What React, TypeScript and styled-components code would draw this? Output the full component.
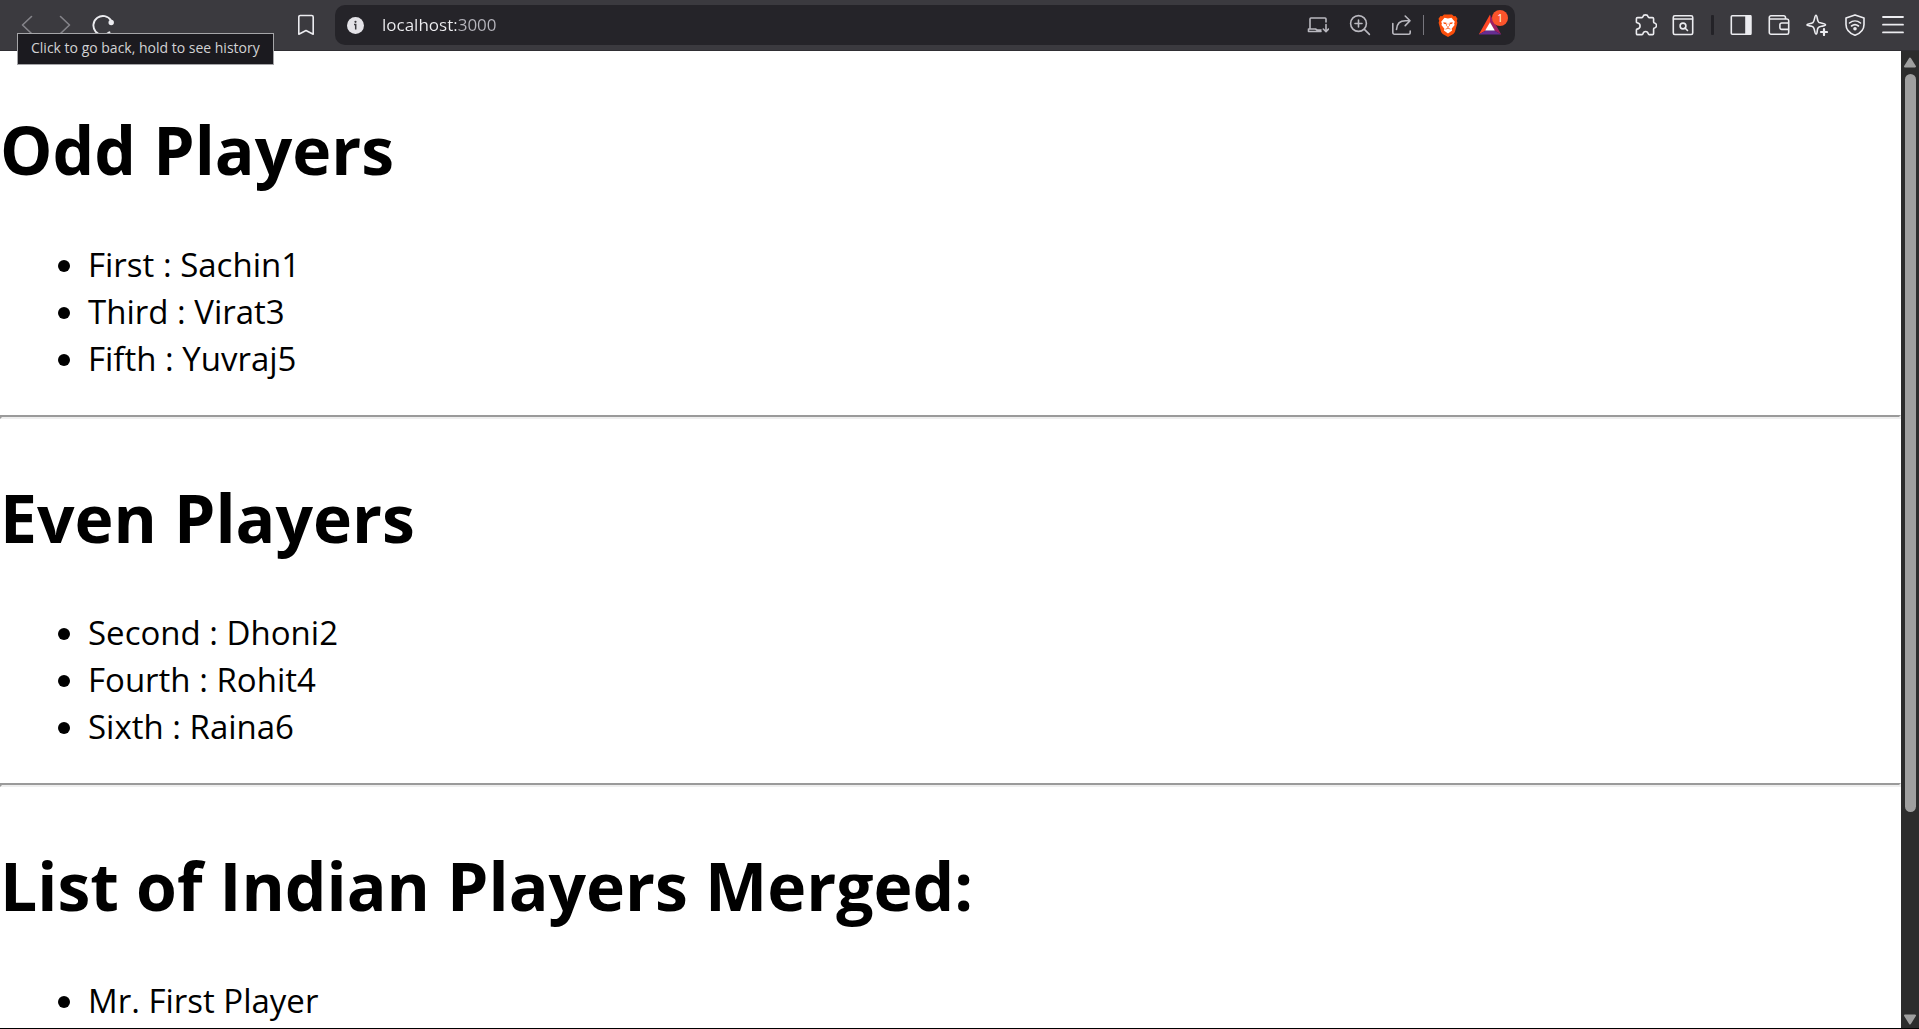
import React from "react";
import styled, { createGlobalStyle } from "styled-components";

const GlobalStyle = createGlobalStyle`
  * { box-sizing: border-box; }
  body {
    margin: 0;
    background: #fff;
    font-family: "Segoe UI", "Open Sans", "Noto Sans", sans-serif;
  }
`;

const Browser = styled.div`
  display: flex;
  flex-direction: column;
  height: 100vh;
  overflow: hidden;
  border-bottom: 1px solid #000;
`;

const Toolbar = styled.header`
  position: relative;
  display: flex;
  flex: none;
  align-items: center;
  padding: 5px 7px 5px 8px;
  background: #3b3a3f;
  border-bottom: 1px solid #2f2e33;
`;

const NavGroup = styled.nav`
  display: flex;
  margin-right: 165px;
`;

const IconButton = styled.button<{ $width?: number; $color?: string }>`
  position: relative;
  display: flex;
  flex: none;
  align-items: center;
  justify-content: center;
  width: ${(p) => p.$width ?? 38}px;
  height: 40px;
  padding: 0;
  border: 0;
  background: none;
  color: ${(p) => p.$color ?? "#ececf0"};
`;

const AddressBar = styled.div`
  display: flex;
  flex: 1;
  align-items: center;
  min-width: 0;
  height: 40px;
  margin: 0 112px 0 10px;
  padding: 0 4px 0 1px;
  border-radius: 10px;
  background: #252429;
`;

const AddressInput = styled.input`
  flex: 1;
  min-width: 0;
  height: 24px;
  margin-left: 8px;
  padding: 0;
  border: 0;
  outline: 0;
  background: linear-gradient(to right, #efeff2 74px, #b6b5bd 74px);
  background-clip: text;
  -webkit-text-fill-color: transparent;
  font: 17px/24px "Segoe UI", "Open Sans", "Noto Sans", sans-serif;
`;

const AddressDivider = styled.span`
  flex: none;
  width: 1px;
  height: 20px;
  margin-right: 3px;
  background: #77767d;
`;

const Badge = styled.span`
  position: absolute;
  top: 5px;
  right: 3px;
  width: 16px;
  height: 16px;
  border-radius: 50%;
  background: #fb542b;
  color: #fff;
  font: 10px/16px "Segoe UI", "Open Sans", sans-serif;
  text-align: center;
`;

const ToolGroup = styled.div`
  display: flex;
  align-items: center;
`;

const ToolDivider = styled.span`
  width: 3px;
  height: 20px;
  margin: 0 8px 0 10px;
  border-radius: 1px;
  background: #232227;
`;

const Tooltip = styled.div`
  position: absolute;
  z-index: 2;
  top: 33px;
  left: 17px;
  padding: 4px 13px 6px;
  border: 1px solid #a5a5a8;
  background: #1b1a1f;
  color: #d2d2d4;
  font-size: 14px;
  line-height: 20px;
  white-space: nowrap;
`;

const Viewport = styled.div`
  display: flex;
  flex: 1;
  min-height: 0;
`;

const Page = styled.main`
  flex: 1;
  min-width: 0;
  overflow: hidden;
  background: #fff;
  color: #000;
`;

const Heading = styled.h1`
  margin: 51px 0 45px;
  font-size: 66px;
  font-weight: 700;
  line-height: 94px;
`;

const PlayerList = styled.ul`
  margin: 33px 0;
  padding-left: 88px;
  font-size: 33px;
  line-height: 47px;
`;

const Rule = styled.hr`
  height: 4px;
  margin: 18px 0;
  border: 2px solid;
  border-color: #9a9a9a #eee #eee #9a9a9a;
`;

const ScrollTrack = styled.div`
  display: flex;
  flex: none;
  flex-direction: column;
  align-items: center;
  width: 18px;
  padding: 6px 0 3px;
  background: #2c2c2c;
  color: #9f9f9f;
`;

const ScrollArea = styled.div`
  flex: 1;
  margin: 6px 0;
`;

const ScrollThumb = styled.div`
  width: 11px;
  height: 79%;
  border-radius: 6px;
  background: #9f9f9f;
`;

type IconProps = { children: React.ReactNode; width?: number };

const Icon = ({ children, width = 1.6 }: IconProps) => (
  <svg
    width="22"
    height="22"
    viewBox="0 0 22 22"
    fill="none"
    stroke="currentColor"
    strokeWidth={width}
    strokeLinecap="round"
    strokeLinejoin="round"
    aria-hidden="true"
  >
    {children}
  </svg>
);

const BackIcon = () => <Icon><path d="M15.500 2.500 6.500 11l9 8.500" /></Icon>;
const ForwardIcon = () => <Icon><path d="m6.500 2.500 9 8.500-9 8.500" /></Icon>;
const ReloadIcon = () => (
  <Icon width={1.9}>
    <path d="M17.500 18.300A9.500 9.500 0 1 1 19 6.500" />
    <circle cx="19.200" cy="8.500" r="2.700" fill="currentColor" stroke="none" />
  </Icon>
);
const BookmarkIcon = () => (
  <Icon><path d="M5.300 1.500h11.400a1.500 1.500 0 0 1 1.500 1.500v17.200L11 16.500l-7.200 3.700V3a1.500 1.500 0 0 1 1.500-1.500Z" /></Icon>
);
const InfoIcon = () => (
  <svg width="17" height="17" viewBox="0 0 17 17" aria-hidden="true">
    <circle cx="8.500" cy="8.500" r="8.500" fill="#e4e3e8" />
    <path d="M7 7.400h1.700v5" stroke="#3b3a3f" strokeWidth="1.500" fill="none" />
    <circle cx="8.500" cy="4.800" r="1.100" fill="#3b3a3f" />
  </svg>
);
const InstallIcon = () => (
  <Icon>
    <path d="M3 14.500V5a1 1 0 0 1 1-1h14a1 1 0 0 1 1 1v3M1.500 17.500v-2.500h7l1.500 1h4M1.500 17.500H14M19 10.500v7M16.300 15l2.700 2.700 2.500-2.700" />
  </Icon>
);
const ZoomIcon = () => (
  <Icon><circle cx="9.500" cy="9.500" r="7.900" /><path d="m15.400 15.400 5 5M9.500 6v7M6 9.500h7" /></Icon>
);
const ShareIcon = () => (
  <Icon>
    <path d="M1.800 9.500v9a1.700 1.700 0 0 0 1.700 1.700h14a1.700 1.700 0 0 0 1.700-1.700V17M5.500 15.500c.3-5.500 3.500-8.700 9-8.700h4.300M14.200 2l4.800 4.800-4.800 4.800" />
  </Icon>
);
const BraveIcon = () => (
  <svg width="20" height="23" viewBox="0 0 20 23" aria-hidden="true">
    <path d="M6 .5h8l1.800 1.800 1.700-.2 2 2.600-.7 2 .6 2-2.500 9.200-1.600 2.200L10 23l-5.300-2.900-1.600-2.200L.6 8.700l.6-2-.7-2 2-2.600 1.700.2Z" fill="#fb4f0c" />
    <path d="M6.500 3.700 10 4.400l3.500-.7 3.300 4-.7 1.800.5 1.600-3 3.600.5 1.700L10 19.500l-4.100-3.100.5-1.700-3-3.600.5-1.600-.7-1.800Z" fill="#fff" />
    <path d="m5.200 8.200 3.400.6-.8 1.400-2-.5ZM14.800 8.200l-3.400.6.8 1.400 2-.5ZM8.600 12.400h2.800L10 13.900Z" fill="#fb4f0c" />
    <path d="m8.900 9.500-.5 2.300M11.100 9.500l.5 2.300M7.500 15.200l2.500-1 2.500 1" stroke="#fb4f0c" strokeWidth=".8" fill="none" />
  </svg>
);
const RewardsIcon = () => (
  <svg width="24" height="22" viewBox="0 0 24 22" aria-hidden="true">
    <path d="M12 .5.800 20.500 8 16.200 12 8.500Z" fill="#ff4724" />
    <path d="M12 .5 23.200 20.500 16 16.200 12 8.500Z" fill="#9e1f63" />
    <path d="M.8 20.500h22.400L16 16.200H8Z" fill="#662d91" />
    <path d="m12 8.200 4.800 8.300H7.200Z" fill="#fff" />
  </svg>
);
const PuzzleIcon = () => (
  <Icon>
    <path d="M2.500 3.600h4.300c.7 0 1-.3 1.100-.9C8.200 1.400 9.200.9 10.500.9s2.300.5 2.600 1.800c.1.600.4.900 1.100.9h3.300c.7 0 1.100.4 1.100 1.100V8c0 .6.300.9.900 1 1.300.3 2 1.200 2 2.500s-.7 2.200-2 2.500c-.6.100-.9.400-.9 1v4.500c0 .7-.4 1.100-1.100 1.100h-3.300c-.5 0-.8-.3-.9-.8-.3-1.500-1.300-2.300-2.700-2.300s-2.400.8-2.700 2.300c-.1.500-.4.800-.9.800H2.500c-.7 0-1.100-.4-1.100-1.100v-3.600c0-.5.200-.7.700-.8 1.900-.4 3-1.500 3-3.200s-1.100-2.700-3-3.100c-.5-.1-.7-.3-.7-.8V4.700c0-.7.4-1.100 1.100-1.100Z" />
  </Icon>
);
const TabSearchIcon = () => (
  <Icon>
    <rect x="1.300" y="1.800" width="19.400" height="18.700" rx="1.500" />
    <path d="M1.500 5h19M13 14l2.500 2.500" />
    <circle cx="11" cy="12" r="2.900" />
  </Icon>
);
const SidebarIcon = () => (
  <Icon>
    <rect x="1.300" y="1.800" width="19.400" height="18.400" rx="1" />
    <path d="M16 1.800h4.700v18.400H16Z" fill="currentColor" />
  </Icon>
);
const WalletIcon = () => (
  <Icon>
    <path d="M17.500 5V3.500a1.700 1.700 0 0 0-1.700-1.700H3a1.700 1.700 0 0 0-1.700 1.700v15A1.700 1.700 0 0 0 3 20.200h16a1.700 1.700 0 0 0 1.700-1.700V6.700A1.700 1.700 0 0 0 19 5H1.500M20.700 9h-7a1.800 1.800 0 0 0-1.800 1.800v2.800a1.800 1.800 0 0 0 1.800 1.800h7" />
  </Icon>
);
const SparkleIcon = () => (
  <Icon>
    <path d="M10 1.300c1.600 0 .8 6.300 3.100 7.200 2.600.9 6.400.8 6.400 2.300 0 .9-2 1.100-4 1.500-4 .8-4 2-4.300 5-.2 2-.4 2.700-1.200 2.700-1.600 0-.9-5.500-3-7.200C5 11.500 1 12.200 1 10.800s4-.6 5.900-2.200C9 6.900 8.400 1.300 10 1.300Z" />
    <path d="M18 15v6M15 18h6" strokeWidth="2.200" />
  </Icon>
);
const ShieldIcon = () => (
  <Icon>
    <path d="m11 .9 9 3.200v6.400c0 5.200-3.500 8.800-9 10.800-5.500-2-9-5.600-9-10.800V4.100Z" />
    <path d="M5.500 9c3.300-2.700 7.700-2.700 11 0M7.500 12c2.200-1.700 4.800-1.700 7 0" />
    <circle cx="11" cy="14.800" r="1.800" fill="currentColor" stroke="none" />
  </Icon>
);
const MenuIcon = () => <Icon width={1.8}><path d="M1 3h20M1 10.700h20M1 18.400h20" /></Icon>;

const sections = [
  { title: "Odd Players", players: ["First : Sachin1", "Third : Virat3", "Fifth : Yuvraj5"] },
  { title: "Even Players", players: ["Second : Dhoni2", "Fourth : Rohit4", "Sixth : Raina6"] },
  { title: "List of Indian Players Merged:", players: ["Mr. First Player"] },
];

const tools = [
  { label: "Side panel", icon: <SidebarIcon /> },
  { label: "Wallet", icon: <WalletIcon /> },
  { label: "Assistant", icon: <SparkleIcon /> },
  { label: "VPN", icon: <ShieldIcon /> },
  { label: "Menu", icon: <MenuIcon /> },
];

export default function App() {
  return (
    <Browser>
      <GlobalStyle />
      <Toolbar>
        <NavGroup>
          <IconButton aria-label="Back" $color="#85848a"><BackIcon /></IconButton>
          <IconButton aria-label="Forward" $color="#85848a"><ForwardIcon /></IconButton>
          <IconButton aria-label="Reload"><ReloadIcon /></IconButton>
        </NavGroup>
        <IconButton aria-label="Bookmark this page"><BookmarkIcon /></IconButton>
        <AddressBar>
          <IconButton aria-label="Site information"><InfoIcon /></IconButton>
          <AddressInput aria-label="Address" defaultValue="localhost:3000" />
          <IconButton aria-label="Install app" $width={42} $color="#b9b8bf"><InstallIcon /></IconButton>
          <IconButton aria-label="Zoom" $width={42} $color="#b9b8bf"><ZoomIcon /></IconButton>
          <IconButton aria-label="Share" $width={42} $color="#b9b8bf"><ShareIcon /></IconButton>
          <AddressDivider />
          <IconButton aria-label="Shields" $width={42}><BraveIcon /></IconButton>
          <IconButton aria-label="Rewards" $width={42}>
            <RewardsIcon />
            <Badge>1</Badge>
          </IconButton>
        </AddressBar>
        <ToolGroup>
          <IconButton aria-label="Extensions" $width={37}><PuzzleIcon /></IconButton>
          <IconButton aria-label="Search tabs" $width={37}><TabSearchIcon /></IconButton>
          <ToolDivider />
          {tools.map((tool) => (
            <IconButton key={tool.label} aria-label={tool.label}>{tool.icon}</IconButton>
          ))}
        </ToolGroup>
        <Tooltip role="tooltip">Click to go back, hold to see history</Tooltip>
      </Toolbar>
      <Viewport>
        <Page>
          {sections.map((section, index) => (
            <React.Fragment key={section.title}>
              {index > 0 && <Rule />}
              <Heading>{section.title}</Heading>
              <PlayerList>
                {section.players.map((player) => <li key={player}>{player}</li>)}
              </PlayerList>
            </React.Fragment>
          ))}
        </Page>
        <ScrollTrack aria-hidden="true">
          <svg width="14" height="11" viewBox="0 0 14 11">
            <path d="M7 1.500 12 9.500H2Z" fill="currentColor" stroke="currentColor" strokeWidth="2" strokeLinejoin="round" />
          </svg>
          <ScrollArea><ScrollThumb /></ScrollArea>
          <svg width="14" height="11" viewBox="0 0 14 11">
            <path d="M7 9.500 12 1.500H2Z" fill="currentColor" stroke="currentColor" strokeWidth="2" strokeLinejoin="round" />
          </svg>
        </ScrollTrack>
      </Viewport>
    </Browser>
  );
}
